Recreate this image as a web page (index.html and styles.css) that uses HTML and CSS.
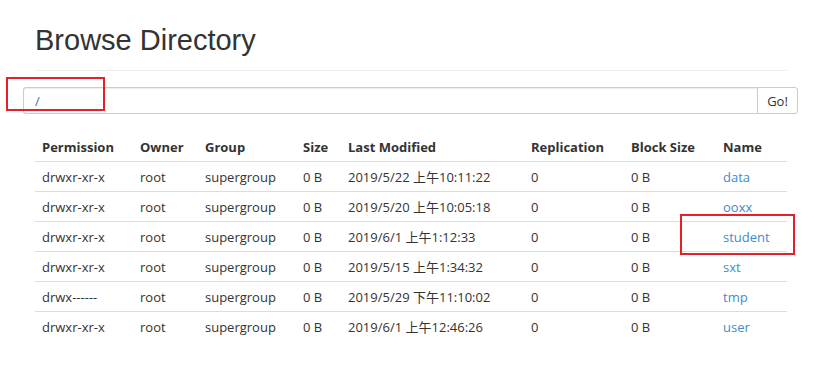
FILE: index.html
```html
<!DOCTYPE html>
<html lang="en">
<head>
    <meta charset="UTF-8">
    <title>Browsing HDFS</title>
    <link rel="stylesheet" href="styles.css">
</head>
<body>
    <div class="container">
        <div class="page-header">
            <h1>Browse Directory</h1>
        </div>

        <form class="input-group">
            <input type="text" class="path-input" value="/">
            <button type="button" class="go-btn">Go!</button>
        </form>

        <table class="listing">
            <thead>
                <tr>
                    <th class="c-perm">Permission</th>
                    <th class="c-owner">Owner</th>
                    <th class="c-group">Group</th>
                    <th class="c-size">Size</th>
                    <th class="c-mod">Last Modified</th>
                    <th class="c-rep">Replication</th>
                    <th class="c-block">Block Size</th>
                    <th class="c-name">Name</th>
                </tr>
            </thead>
            <tbody>
                <tr>
                    <td>drwxr-xr-x</td><td>root</td><td>supergroup</td><td>0 B</td>
                    <td>2019/5/22 上午10:11:22</td><td>0</td><td>0 B</td>
                    <td><a href="#">data</a></td>
                </tr>
                <tr>
                    <td>drwxr-xr-x</td><td>root</td><td>supergroup</td><td>0 B</td>
                    <td>2019/5/20 上午10:05:18</td><td>0</td><td>0 B</td>
                    <td><a href="#">ooxx</a></td>
                </tr>
                <tr>
                    <td>drwxr-xr-x</td><td>root</td><td>supergroup</td><td>0 B</td>
                    <td>2019/6/1 上午1:12:33</td><td>0</td><td>0 B</td>
                    <td><a href="#">student</a></td>
                </tr>
                <tr>
                    <td>drwxr-xr-x</td><td>root</td><td>supergroup</td><td>0 B</td>
                    <td>2019/5/15 上午1:34:32</td><td>0</td><td>0 B</td>
                    <td><a href="#">sxt</a></td>
                </tr>
                <tr>
                    <td>drwx------</td><td>root</td><td>supergroup</td><td>0 B</td>
                    <td>2019/5/29 下午11:10:02</td><td>0</td><td>0 B</td>
                    <td><a href="#">tmp</a></td>
                </tr>
                <tr>
                    <td>drwxr-xr-x</td><td>root</td><td>supergroup</td><td>0 B</td>
                    <td>2019/6/1 上午12:46:26</td><td>0</td><td>0 B</td>
                    <td><a href="#">user</a></td>
                </tr>
            </tbody>
        </table>
    </div>

    <!-- red annotation boxes from the screenshot -->
    <div class="mark mark-path"></div>
    <div class="mark mark-student"></div>
</body>
</html>
```

FILE: styles.css
```css
body {
    margin: 0;
    font-family: "Open Sans", "Noto Sans CJK SC", sans-serif;
    font-size: 13px;
    color: #333;
    background-color: #fff;
}

.container {
    padding: 0 52px 0 35px;
}

.page-header {
    padding-top: 20px;
    padding-bottom: 10px;
    border-bottom: 1px solid #eee;
}

h1 {
    margin: 0;
    font-family: "Liberation Sans", Arial, sans-serif;
    font-size: 29px;
    font-weight: normal;
    line-height: 40px;
    color: #333;
}

.input-group {
    display: flex;
    margin: 16px -11px 0 -12px;
    height: 27px;
}

.path-input {
    flex-grow: 1;
    height: 27px;
    box-sizing: border-box;
    padding: 0 11px;
    border: 1px solid #ccc;
    border-right: none;
    border-radius: 3px 0 0 3px;
    font-family: "Open Sans", sans-serif;
    font-size: 13px;
    color: #4a6ea8;
    box-shadow: inset 0 1px 1px rgba(0, 0, 0, 0.075);
}

.go-btn {
    width: 41px;
    height: 27px;
    border: 1px solid #ccc;
    border-radius: 0 3px 3px 0;
    background-color: #fff;
    font-family: "Open Sans", sans-serif;
    font-size: 13px;
    color: #333;
    padding: 0;
}

.listing {
    width: 100%;
    margin-top: 18px;
    border-collapse: collapse;
}

.listing th,
.listing td {
    padding: 0 7px;
    height: 29px;
    text-align: left;
    white-space: nowrap;
}

.listing th {
    font-weight: bold;
    border-bottom: 1px solid #ddd;
}

.listing tbody tr + tr td {
    border-top: 1px solid #ddd;
}

.listing a {
    color: #428bca;
    text-decoration: none;
}

.c-perm { width: 84px; }
.c-owner { width: 51px; }
.c-group { width: 84px; }
.c-size { width: 31px; }
.c-mod { width: 169px; }
.c-rep { width: 86px; }
.c-block { width: 78px; }

.mark {
    position: absolute;
    border: 2px solid #e5202a;
    box-sizing: border-box;
}

.mark-path {
    left: 6px;
    top: 77px;
    width: 99px;
    height: 34px;
}

.mark-student {
    left: 680px;
    top: 214px;
    width: 115px;
    height: 41px;
}
```
